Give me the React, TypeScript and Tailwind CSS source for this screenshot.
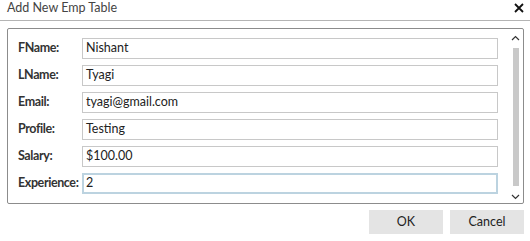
import React from "react";

const rows: { label: string; value: string; focus?: boolean }[] = [
  { label: "FName:", value: "Nishant" },
  { label: "LName:", value: "Tyagi" },
  { label: "Email:", value: "tyagi@gmail.com" },
  { label: "Profile:", value: "Testing" },
  { label: "Salary:", value: "$100.00" },
  { label: "Experience:", value: "2", focus: true },
];

export default function App() {
  return (
    <div
      className="w-[530px] h-[241px] bg-white text-[#333] flex flex-col"
      style={{ fontFamily: 'Lato, "Open Sans", sans-serif' }}
    >
      <div className="h-[21px] flex items-start justify-between pl-[7px] pr-[6px] border-b border-[#b4b4b4]">
        <span className="text-[12.5px] leading-[16px] text-[#444]">Add New Emp Table</span>
        <svg width="10" height="10" viewBox="0 0 10 10" className="mt-[3px]">
          <path d="M1 1 L9 9 M9 1 L1 9" stroke="#111" strokeWidth="1.8" />
        </svg>
      </div>
      <div className="mt-[7px] ml-[7px] mr-[6px] h-[176px] border border-[#8c8c8c] rounded-[2px] flex">
        <div className="flex-1 pt-[9px] pl-[10px] pr-[10px] flex flex-col gap-[6px]">
          {rows.map((r) => (
            <div key={r.label} className="flex items-center h-[21px]">
              <div className="w-[64px] whitespace-nowrap text-[12.5px] tracking-[-0.4px] font-bold text-[#333]">{r.label}</div>
              <div
                className={`flex-1 h-[21px] flex items-center text-[12.5px] text-[#222] border ${
                  r.focus ? "border-[#bcd3e0] border-[2px] px-[2px]" : "border-[#c8c8c8] px-[3px]"
                }`}
              >
                {r.value}
              </div>
            </div>
          ))}
        </div>
        <div className="w-[15px] flex flex-col items-center">
          <svg width="9" height="6" viewBox="0 0 9 6" className="mt-[6px]">
            <path d="M1 5 L4.5 1.5 L8 5" stroke="#333" strokeWidth="1.2" fill="none" />
          </svg>
          <div className="mt-[7px] w-[6px] h-[138px] bg-[#c9c9c9]" />
          <svg width="9" height="6" viewBox="0 0 9 6" className="mt-[8px]">
            <path d="M1 1 L4.5 4.5 L8 1" stroke="#333" strokeWidth="1.2" fill="none" />
          </svg>
        </div>
      </div>
      <div className="flex justify-end gap-[7px] mt-[6px] mr-[6px]">
        <div className="w-[74px] h-[24px] bg-[#e4e4e4] flex items-center justify-center text-[12.5px] text-[#222]">OK</div>
        <div className="w-[74px] h-[24px] bg-[#e4e4e4] flex items-center justify-center text-[12.5px] text-[#222]">Cancel</div>
      </div>
    </div>
  );
}
